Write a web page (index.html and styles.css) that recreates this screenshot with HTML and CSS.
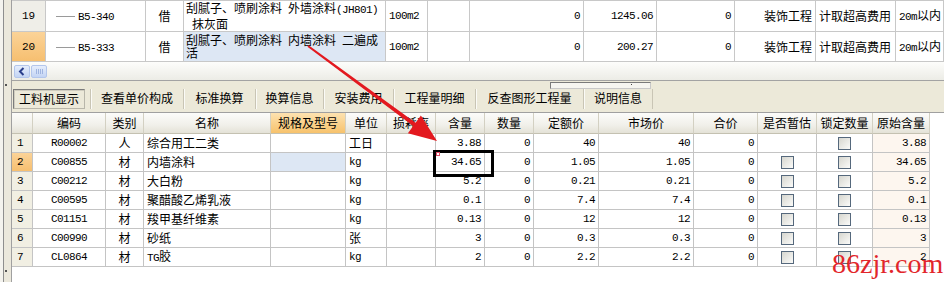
FILE: index.html
```html
<!DOCTYPE html>
<html lang="zh-CN">
<head>
    <meta charset="UTF-8">
    <title>工料机显示</title>
    <link rel="stylesheet" href="styles.css">
</head>
<body>
    <div class="frame">
        <!-- 左侧分隔条 -->
        <div class="side"><i class="dot dot1"></i><i class="dot dot2"></i></div>

        <div class="main">
            <!-- 定额子目 -->
            <table class="upper">
                <colgroup>
                    <col style="width:34px"><col style="width:100px"><col style="width:38px"><col style="width:202px">
                    <col style="width:42px"><col style="width:42px"><col style="width:114px"><col style="width:73px">
                    <col style="width:78px"><col style="width:81px"><col style="width:80px"><col style="width:48px">
                </colgroup>
                <tr>
                    <td class="no">19</td>
                    <td class="code"><span class="branch"></span><span class="n">B5-340</span></td>
                    <td class="c">借</td>
                    <td class="name">刮腻子、喷刷涂料&ensp;外墙涂料<span class="n">(JH801)</span><br>&ensp;抹灰面</td>
                    <td class="n">100m2</td>
                    <td></td>
                    <td class="n r">0</td>
                    <td class="n r">1245.06</td>
                    <td class="n r">0</td>
                    <td class="r">装饰工程</td>
                    <td>计取超高费用</td>
                    <td><span class="n">20m</span>以内</td>
                </tr>
                <tr>
                    <td class="no on">20</td>
                    <td class="code"><span class="branch"></span><span class="n">B5-333</span></td>
                    <td class="c">借</td>
                    <td class="name sel">刮腻子、喷刷涂料&ensp;内墙涂料&ensp;二遍成<br>活</td>
                    <td class="n">100m2</td>
                    <td></td>
                    <td class="n r">0</td>
                    <td class="n r">200.27</td>
                    <td class="n r">0</td>
                    <td class="r">装饰工程</td>
                    <td>计取超高费用</td>
                    <td><span class="n">20m</span>以内</td>
                </tr>
            </table>

            <!-- 横向滚动条 -->
            <div class="hscroll">
                <span class="sbtn"><svg width="14" height="11" viewBox="0 0 14 11"><path d="M8.5 2 L5 5.5 L8.5 9" fill="none" stroke="#2a3f8c" stroke-width="2"/></svg></span>
                <span class="thumb"><i></i><i></i><i></i><i></i></span>
            </div>

            <!-- 页签 -->
            <div class="tabs">
                <span class="tab on">工料机显示</span>
                <span class="tab w93">查看单价构成</span>
                <span class="tab w72">标准换算</span>
                <span class="tab w68">换算信息</span>
                <span class="tab w70">安装费用</span>
                <span class="tab w82">工程量明细</span>
                <span class="tab w108">反查图形工程量</span>
                <span class="tab w69 last">说明信息</span>
                <span class="grip"><i></i></span>
            </div>

            <!-- 工料机 -->
            <table class="lower">
                <colgroup>
                    <col style="width:21px"><col style="width:73px"><col style="width:38px"><col style="width:127px">
                    <col style="width:75px"><col style="width:41px"><col style="width:49px"><col style="width:49px">
                    <col style="width:49px"><col style="width:65px"><col style="width:95px"><col style="width:64px">
                    <col style="width:59px"><col style="width:56px"><col style="width:57px">
                </colgroup>
                <tr>
                    <th></th><th>编码</th><th>类别</th><th>名称</th><th class="hl">规格及型号</th><th>单位</th><th>损耗率</th>
                    <th>含量</th><th>数量</th><th>定额价</th><th>市场价</th><th>合价</th><th>是否暂估</th><th>锁定数量</th><th>原始含量</th>
                </tr>
                <tr>
                    <td class="no n">1</td><td class="n c">R00002</td><td class="c">人</td><td>综合用工二类</td><td></td><td>工日</td><td></td>
                    <td class="n r">3.88</td><td class="n r">0</td><td class="n r">40</td><td class="n r">40</td><td class="n r">0</td>
                    <td></td><td class="c"><span class="cb"></span></td><td class="n r orig">3.88</td>
                </tr>
                <tr>
                    <td class="no on n">2</td><td class="n c">C00855</td><td class="c">材</td><td>内墙涂料</td><td class="sel"></td><td class="n">kg</td><td></td>
                    <td class="n r">34.65</td><td class="n r">0</td><td class="n r">1.05</td><td class="n r">1.05</td><td class="n r">0</td>
                    <td class="c"><span class="cb"></span></td><td class="c"><span class="cb"></span></td><td class="n r orig">34.65</td>
                </tr>
                <tr>
                    <td class="no n">3</td><td class="n c">C00212</td><td class="c">材</td><td>大白粉</td><td></td><td class="n">kg</td><td></td>
                    <td class="n r">5.2</td><td class="n r">0</td><td class="n r">0.21</td><td class="n r">0.21</td><td class="n r">0</td>
                    <td class="c"><span class="cb"></span></td><td class="c"><span class="cb"></span></td><td class="n r orig">5.2</td>
                </tr>
                <tr>
                    <td class="no n">4</td><td class="n c">C00595</td><td class="c">材</td><td>聚醋酸乙烯乳液</td><td></td><td class="n">kg</td><td></td>
                    <td class="n r">0.1</td><td class="n r">0</td><td class="n r">7.4</td><td class="n r">7.4</td><td class="n r">0</td>
                    <td class="c"><span class="cb"></span></td><td class="c"><span class="cb"></span></td><td class="n r orig">0.1</td>
                </tr>
                <tr>
                    <td class="no n">5</td><td class="n c">C01151</td><td class="c">材</td><td>羧甲基纤维素</td><td></td><td class="n">kg</td><td></td>
                    <td class="n r">0.13</td><td class="n r">0</td><td class="n r">12</td><td class="n r">12</td><td class="n r">0</td>
                    <td class="c"><span class="cb"></span></td><td class="c"><span class="cb"></span></td><td class="n r orig">0.13</td>
                </tr>
                <tr>
                    <td class="no n">6</td><td class="n c">C00990</td><td class="c">材</td><td>砂纸</td><td></td><td>张</td><td></td>
                    <td class="n r">3</td><td class="n r">0</td><td class="n r">0.3</td><td class="n r">0.3</td><td class="n r">0</td>
                    <td class="c"><span class="cb"></span></td><td class="c"><span class="cb"></span></td><td class="n r orig">3</td>
                </tr>
                <tr>
                    <td class="no n">7</td><td class="n c">CL0864</td><td class="c">材</td><td><span class="n">TG</span>胶</td><td></td><td class="n">kg</td><td></td>
                    <td class="n r">2</td><td class="n r">0</td><td class="n r">2.2</td><td class="n r">2.2</td><td class="n r">0</td>
                    <td class="c"><span class="cb"></span></td><td class="c"><span class="cb"></span></td><td class="n r orig">2</td>
                </tr>
            </table>
        </div>
    </div>

    <!-- 标注：箭头、方框、水印 -->
    <svg class="arrow" width="944" height="282" viewBox="0 0 944 282">
        <polygon points="308.6,45.2 415.6,122.8 420.9,115.5 437,141 407.9,133.3 413.2,126 307.4,46.8" fill="#e3191f"/>
    </svg>
    <div class="mark"></div>
    <div class="note"></div>
    <div class="wm">86zjr.com</div>
</body>
</html>
```

FILE: styles.css
```css
*{
    margin: 0;
    padding: 0;
    box-sizing: border-box;
}
body{
    width: 944px;
    height: 282px;
    overflow: hidden;
    position: relative;
    background: #fff;
    color: #000;
    font: 12px "Noto Sans CJK SC", sans-serif;
}
.frame{
    display: flex;
    height: 282px;
}
/* 左侧分隔条 */
.side{
    width: 12px;
    flex: none;
    position: relative;
    background: #ebe8dc;
    border-right: 1px solid #a0a0a0;
    box-shadow: inset 3px 0 0 #f4f3ee, inset 4px 0 0 #8e8e8e;
}
.side .dot{
    position: absolute;
    left: 5px;
    width: 2px;
    height: 2px;
    background: #555;
}
.side .dot1{top: 84px;}
.side .dot2{top: 270px;}
.main{
    flex: 1;
    min-width: 0;
    display: flex;
    flex-direction: column;
}

table{
    border-collapse: separate;
    border-spacing: 0;
    table-layout: fixed;
}
td, th{
    overflow: hidden;
    white-space: nowrap;
    line-height: 12px;
    padding: 0 3px;
    font-weight: normal;
    text-align: left;
}
.n{
    font-family: "Liberation Mono", "Noto Sans CJK SC", monospace;
    font-size: 11px;
    letter-spacing: -0.6px;
}
.r{text-align: right;}
.c{text-align: center;}

/* 定额子目 */
.upper{
    width: 932px;
    border-top: 1px solid #c8c8c8;
}
.upper td{
    height: 30px;
    border-right: 1px solid #c8c8c8;
    border-bottom: 1px solid #c8c8c8;
}
.upper td.no{
    text-align: center;
    background: #efeee8;
    font-family: "Liberation Mono", monospace;
    font-size: 11px;
}
.upper td.no.on{background: linear-gradient(#fbd398, #f6bf70);}
.upper td.code{padding: 0;}
.branch{
    display: inline-block;
    width: 19px;
    height: 1px;
    margin: 0 3px 0 10px;
    background: #9a9a9a;
    vertical-align: middle;
}
.upper td.name{
    overflow: visible;
    padding: 0 0 1px 2px;
    line-height: 13px;
}
.sel{background: #dde7f4;}

/* 横向滚动条 */
.hscroll{
    height: 19px;
    display: flex;
    gap: 1px;
    padding: 3px 0 0 2px;
    background: linear-gradient(#fdfdfb, #ecece6);
    border-bottom: 1px solid #a3a3a3;
}
.sbtn, .thumb{
    width: 16px;
    height: 13px;
    border: 1px solid #b3c6ec;
    border-radius: 2px;
    background: linear-gradient(#e6eefc, #c3d4f4);
}
.sbtn svg{display: block;}
.thumb{
    display: flex;
    justify-content: center;
    gap: 1px;
    padding-top: 3px;
}
.thumb i{
    width: 1px;
    height: 5px;
    background: #9fb4e0;
}

/* 页签 */
.tabs{
    height: 32px;
    display: flex;
    position: relative;
    padding: 8px 0 0 1px;
    background: #ece9d9;
    border-bottom: 1px solid #a0a0a0;
}
.tab{
    height: 20px;
    line-height: 18px;
    text-align: center;
    border-left: 1px solid #c9c5b5;
    box-shadow: inset 1px 0 0 #fbfbf7;
}
.tab.on{
    width: 72px;
    margin-right: 5px;
    border: 1px solid #7c7c7c;
    border-color: #7c7c7c #b8b6aa #b8b6aa #7c7c7c;
    box-shadow: inset 1px 1px 0 #cfccbf;
}
.tab.last{border-right: 1px solid #c9c5b5;}
.w93{width: 93px;}
.w72{width: 72px;}
.w68{width: 68px;}
.w70{width: 70px;}
.w82{width: 82px;}
.w108{width: 108px;}
.w69{width: 70px;}
.grip{
    position: absolute;
    left: 538px;
    top: 1px;
    width: 101px;
    height: 7px;
    border: 1px solid #8c8c8c;
    border-color: #7a7a7a #c8c8c8 #c8c8c8 #7a7a7a;
    background: #f6f5f0;
}
.grip i{
    position: absolute;
    left: 80px;
    top: 1px;
    width: 1px;
    height: 1px;
    background: #444;
}

/* 工料机 */
.lower{width: 918px;}
.lower th{
    height: 21px;
    text-align: center;
    background: linear-gradient(#fcfcfa, #f1f0ea 60%, #e4e2d7);
    border-right: 1px solid #d3d0c2;
    border-bottom: 1px solid #c4c1b1;
}
.lower th.hl{background: linear-gradient(#fde2b0, #f7c26c);}
.lower td{
    height: 19px;
    border-right: 1px solid #c4c4c4;
    border-bottom: 1px solid #c4c4c4;
}
.lower td.no{
    padding-left: 5px;
    background: #f1efe3;
}
.lower td.no.on{background: linear-gradient(#fbd398, #f6bf70);}
.lower td.orig{background: #fdf6ef;}
.cb{
    display: inline-block;
    width: 13px;
    height: 13px;
    vertical-align: middle;
    border: 1px solid #55687c;
    background: linear-gradient(135deg, #d6d6cf, #fbfbf9);
}

/* 标注 */
.arrow{
    position: absolute;
    left: 0;
    top: 0;
    pointer-events: none;
}
.mark{
    position: absolute;
    left: 433px;
    top: 150px;
    width: 61px;
    height: 27px;
    border: 3px solid #000;
}
.note{
    position: absolute;
    left: 436px;
    top: 152px;
    width: 4px;
    height: 4px;
    border: 1px solid #e0506a;
}
.wm{
    position: absolute;
    left: 832px;
    top: 250px;
    font: 28px/28px "Liberation Serif", serif;
    color: #e2262b;
}
```
